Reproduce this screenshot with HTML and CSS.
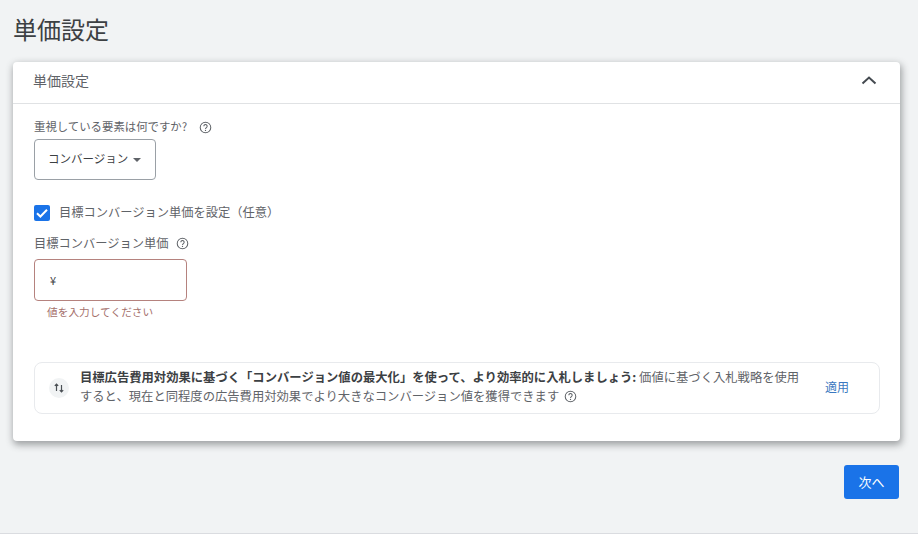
FILE: index.html
```html
<!DOCTYPE html>
<html lang="ja">
<head>
<meta charset="utf-8">
<title>単価設定</title>
<link rel="stylesheet" href="styles.css">
</head>
<body>
<main class="page">
  <h1 class="title">単価設定</h1>
  <section class="card">
    <header class="card-head">
      <span class="card-title">単価設定</span>
      <svg class="chevron" width="24" height="24" viewBox="0 0 24 24"><path d="M5.500 15.500 12 9.500l6.500 6" fill="none" stroke="#444a50" stroke-width="2"/></svg>
    </header>
    <div class="card-body">
      <div class="label first-label"><span class="narrow">重視している要素は何ですか?</span>
        <svg class="help" width="13" height="13" viewBox="0 0 14 14"><circle cx="7" cy="7" r="5.700" fill="none" stroke="#5f6368" stroke-width="1.100"/><path d="M5.200 5.600a1.800 1.800 0 1 1 2.800 1.500c-.6.4-1 .7-1 1.400" fill="none" stroke="#5f6368" stroke-width="1.100"/><circle cx="7" cy="10.200" r=".7" fill="#5f6368"/></svg>
      </div>
      <div class="select"><span class="select-text">コンバージョン</span><span class="caret"></span></div>
      <label class="check-row">
        <span class="checkbox"><svg width="16" height="16" viewBox="0 0 16 16"><path d="M3 8.200 6.400 11.500 13 4.800" fill="none" stroke="#fff" stroke-width="2"/></svg></span>
        <span class="check-text">目標コンバージョン単価を設定（任意）</span>
      </label>
      <div class="label cpa-label">目標コンバージョン単価
        <svg class="help" width="13" height="13" viewBox="0 0 14 14"><circle cx="7" cy="7" r="5.700" fill="none" stroke="#5f6368" stroke-width="1.100"/><path d="M5.200 5.600a1.800 1.800 0 1 1 2.800 1.500c-.6.4-1 .7-1 1.400" fill="none" stroke="#5f6368" stroke-width="1.100"/><circle cx="7" cy="10.200" r=".7" fill="#5f6368"/></svg>
      </div>
      <div class="input">¥</div>
      <div class="error">値を入力してください</div>
      <div class="tip">
        <span class="tip-icon"><svg width="14" height="14" viewBox="0 0 14 14"><path d="M4.500 10V3M2.800 4.800 4.500 3l1.700 1.800M9.500 4v7M7.800 9.200 9.500 11l1.700-1.800" fill="none" stroke="#4a4f54" stroke-width="1.200"/></svg></span>
        <p class="tip-text"><strong>目標広告費用対効果に基づく「コンバージョン値の最大化」を使って、より効率的に入札しましょう:</strong> 価値に基づく入札戦略を使用すると、現在と同程度の広告費用対効果でより大きなコンバージョン値を獲得できます
          <svg class="help" width="13" height="13" viewBox="0 0 14 14"><circle cx="7" cy="7" r="5.700" fill="none" stroke="#5f6368" stroke-width="1.100"/><path d="M5.200 5.600a1.800 1.800 0 1 1 2.800 1.500c-.6.4-1 .7-1 1.400" fill="none" stroke="#5f6368" stroke-width="1.100"/><circle cx="7" cy="10.200" r=".7" fill="#5f6368"/></svg>
        </p>
        <a class="apply">適用</a>
      </div>
    </div>
  </section>
  <div class="actions"><button class="next">次へ</button></div>
</main>
</body>
</html>
```
FILE: styles.css
```css
* { box-sizing: border-box; }
html, body { margin: 0; height: 100%; }
body {
  background: #f1f3f4;
  font-family: "Noto Sans CJK JP", Roboto, "Noto Sans", sans-serif;
  color: #5f6368;
  overflow: hidden;
}
.page { padding: 0 18px 0 13px; height: 534px; border-bottom: 1px solid #dadce0; }
.title {
  margin: 0;
  padding-top: 13px;
  height: 62px;
  font-size: 24px;
  line-height: 32px;
  font-weight: 400;
  color: #3c4043;
}
.card {
  background: #fff;
  border-radius: 4px;
  height: 379px;
  box-shadow: 1px 3px 7px 1px rgba(60, 64, 67, .45);
}
.card-head {
  height: 42px;
  padding: 0 19px 6px 20px;
  display: flex;
  align-items: center;
  justify-content: space-between;
  border-bottom: 1px solid #e0e2e4;
  font-size: 14px;
  color: #5f6368;
}
.card-body { padding: 0 20px 0 21px; }
.label { font-size: 12.250px; line-height: 18px; display: flex; align-items: center; gap: 7px; color: #5f6368; }
.first-label { padding-top: 12px; height: 35px; }
.narrow { font-size: 11.400px; margin-right: 5px; margin-top: -3px; }
.select {
  width: 122px;
  height: 41px;
  border: 1px solid #9aa0a6;
  border-radius: 4px;
  display: flex;
  align-items: center;
  padding-left: 13px;
  font-size: 11.500px;
  color: #3c4043;
}
.select-text { margin-top: -3px; }
.caret {
  margin-left: 5px;
  border-left: 4.500px solid transparent;
  border-right: 4.500px solid transparent;
  border-top: 4.500px solid #5f6368;
}
.check-row {
  display: flex;
  align-items: center;
  gap: 9px;
  margin-top: 24px;
  height: 18px;
  font-size: 12.250px;
  color: #5f6368;
}
.check-text { margin-top: -2px; }
.checkbox {
  width: 16px;
  height: 16px;
  border-radius: 2px;
  background: #1a73e8;
  display: flex;
}
.cpa-label { margin-top: 12px; height: 18px; }
.input {
  margin-top: 7px;
  width: 153px;
  height: 42px;
  border: 1.500px solid #b5827e;
  border-radius: 4px;
  display: flex;
  align-items: center;
  padding-left: 15px;
  font-size: 11px;
  color: #3c4043;
}
.error { margin: 2px 0 0 13px; font-size: 10.700px; line-height: 18px; color: #a5706c; }
.tip {
  margin-top: 41px;
  height: 52px;
  border: 1px solid #e8eaed;
  border-radius: 8px;
  display: flex;
  align-items: center;
  padding: 0 30px 0 14px;
}
.tip-icon {
  width: 20px;
  height: 20px;
  border-radius: 50%;
  background: #f1f3f4;
  display: flex;
  align-items: center;
  justify-content: center;
  flex: none;
}
.tip-text { margin: -2px 0 0 11px; width: 728px; font-size: 12.320px; line-height: 19px; color: #5f6368; }
.tip-text strong { color: #3c4043; font-weight: 700; }
.tip-text .help { vertical-align: -2px; margin-left: 2px; }
.apply { margin: 0 0 3px auto; font-size: 12px; color: #3a78c0; }
.actions { display: flex; justify-content: flex-end; margin-top: 24px; padding-right: 1px; }
.next {
  width: 55px;
  height: 34px;
  border: 0;
  border-radius: 3px;
  background: #1a73e8;
  color: #fff;
  font: inherit;
  font-size: 13px;
  padding: 0 0 2px;
}
```
